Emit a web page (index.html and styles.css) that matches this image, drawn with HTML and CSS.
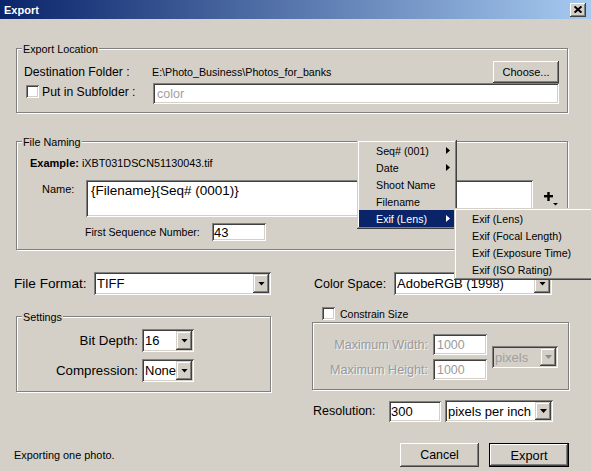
FILE: index.html
```html
<!DOCTYPE html>
<html>
<head>
<meta charset="utf-8">
<title>Export</title>
<link rel="stylesheet" href="styles.css">
</head>
<body>
<div class="window">
  <div class="titlebar">
    <span class="title">Export</span>
    <span class="close"><svg width="8" height="7" viewBox="0 0 8 7"><path d="M0.6 0.4 L7.4 6.6 M7.4 0.4 L0.6 6.6" stroke="#000" stroke-width="1.9"/></svg></span>
  </div>
  <div class="content">
    <div class="group loc">
      <span class="legend">Export Location</span>
      <span class="lbl">Destination Folder :</span>
      <span class="path">E:\Photo_Business\Photos_for_banks</span>
      <span class="btn choose">Choose...</span>
      <span class="lbl chk-lbl"><span class="cbox"></span>Put in Subfolder :</span>
      <span class="field sub">color</span>
    </div>

    <div class="group naming">
      <span class="legend">File Naming</span>
      <div class="example"><b>Example:</b> iXBT031DSCN51130043.tif</div>
      <div class="name-row">
        <span class="name-lbl">Name:</span>
        <div class="field textarea">{Filename}{Seq# (0001)}</div>
        <svg class="plus" width="17" height="16" viewBox="0 0 17 16"><rect x="1" y="4" width="9" height="2.4" fill="#000"/><rect x="4.3" y="1" width="2.4" height="9" fill="#000"/><polygon points="10,12 15,12 12.5,14.6" fill="#000"/></svg>
      </div>
      <div class="seq-row">
        <span class="seq-lbl">First Sequence Number:</span>
        <span class="field seq">43</span>
      </div>
    </div>

    <div class="formats">
      <div class="fmt left">
        <span class="fmt-lbl">File Format:</span>
        <div class="combo ff"><span class="val">TIFF</span><span class="arr"><i class="tri"></i></span></div>
      </div>
      <div class="fmt right">
        <span class="fmt-lbl cs">Color Space:</span>
        <div class="combo csel"><span class="val">AdobeRGB (1998)</span><span class="arr"><i class="tri"></i></span></div>
      </div>
    </div>

    <div class="lower">
      <div class="group settings">
        <span class="legend">Settings</span>
        <div class="set-row">
          <span class="set-lbl">Bit Depth:</span>
          <div class="combo small"><span class="val">16</span><span class="arr"><i class="tri"></i></span></div>
        </div>
        <div class="set-row">
          <span class="set-lbl">Compression:</span>
          <div class="combo small"><span class="val">None</span><span class="arr"><i class="tri"></i></span></div>
        </div>
      </div>

      <div class="rcol">
        <div class="cs-row"><span class="cbox"></span><span class="cs-lbl">Constrain Size</span></div>
        <div class="group constrain">
          <div class="c-grid">
            <span class="c-lbl dis">Maximum Width:</span>
            <span class="field num dtxt">1000</span>
            <div class="combo disabled pix"><span class="val">pixels</span><span class="arr"><i class="tri"></i></span></div>
            <span class="c-lbl dis">Maximum Height:</span>
            <span class="field num dtxt">1000</span>
          </div>
        </div>
        <div class="res-row">
          <span class="res-lbl">Resolution:</span>
          <span class="field res">300</span>
          <div class="combo ppi"><span class="val">pixels per inch</span><span class="arr"><i class="tri"></i></span></div>
        </div>
      </div>
    </div>

    <div class="footer">
      <span class="status">Exporting one photo.</span>
      <span class="btn cancel">Cancel</span>
      <span class="btn export">Export</span>
    </div>
  </div>

  <div class="menu m1">
    <div class="mi">Seq# (001)<i class="rtri"></i></div>
    <div class="mi">Date<i class="rtri"></i></div>
    <div class="mi">Shoot Name</div>
    <div class="mi">Filename</div>
    <div class="mi hl">Exif (Lens)<i class="rtri"></i></div>
  </div>
  <div class="menu m2">
    <div class="mi">Exif (Lens)</div>
    <div class="mi">Exif (Focal Length)</div>
    <div class="mi">Exif (Exposure Time)</div>
    <div class="mi">Exif (ISO Rating)</div>
  </div>
</div>
</body>
</html>
```

FILE: styles.css
```css
* { box-sizing: border-box; }
html, body { margin: 0; padding: 0; }
body {
  width: 591px; height: 471px; overflow: hidden;
  background: #d4d0c8;
  font-family: "Liberation Sans", Arial, sans-serif;
  font-size: 11px; color: #000;
}
.window {
  position: relative; width: 591px; height: 471px;
  background: #d4d0c8; overflow: hidden;
  display: flex; flex-direction: column;
}
.titlebar {
  height: 19px; flex: none;
  background: linear-gradient(to right, #0a246a, #a6caf0);
  display: flex; align-items: center;
  padding: 0 5px 0 4px;
}
.title { flex: 1; color: #fff; font-weight: bold; font-size: 11px; }
.close {
  width: 16px; height: 14px; background: #d4d0c8;
  display: flex; align-items: center; justify-content: center;
  box-shadow: inset -1px -1px #404040, inset 1px 1px #fff, inset -2px -2px #808080;
}
.close svg { display: block; }

.content {
  flex: 1; display: flex; flex-direction: column;
  padding: 29px 22px 4px 16px;
}

/* group boxes */
.group {
  position: relative;
  border: 1px solid #808080;
  box-shadow: inset 1px 1px 0 #fff, 1px 1px 0 #fff;
}
.legend {
  position: absolute; top: -6px; left: 5px;
  padding: 0 1px; background: #d4d0c8;
  font-size: 10.8px; line-height: 13px; white-space: nowrap;
}

/* 3D pieces */
.btn {
  display: flex; align-items: center; justify-content: center;
  background: #d4d0c8;
  box-shadow: inset -1px -1px #404040, inset 1px 1px #fff, inset -2px -2px #808080;
}
.field {
  background: #fff;
  box-shadow: inset 1px 1px #808080, inset -1px -1px #fff, inset 2px 2px #404040, inset -2px -2px #d4d0c8;
  display: flex; align-items: center;
  font-size: 13px; padding: 0 4px; white-space: nowrap;
}
.cbox {
  width: 13px; height: 13px; flex: none; background: #fff;
  box-shadow: inset 1px 1px #808080, inset -1px -1px #fff, inset 2px 2px #404040, inset -2px -2px #d4d0c8;
}
.combo {
  display: flex; height: 23px; padding: 2px; background: #fff;
  box-shadow: inset 1px 1px #808080, inset -1px -1px #fff, inset 2px 2px #404040, inset -2px -2px #d4d0c8;
  font-size: 13px; flex: none;
}
.combo .val { flex: 1; display: flex; align-items: center; padding-left: 1px; white-space: nowrap; overflow: hidden; }
.combo .arr {
  width: 16px; flex: none; background: #d4d0c8;
  display: flex; align-items: center; justify-content: center;
  box-shadow: inset -1px -1px #404040, inset 1px 1px #d4d0c8, inset -2px -2px #808080, inset 2px 2px #fff;
}
.tri {
  display: block; width: 7px; height: 4px; background: #000;
  clip-path: polygon(0 0, 100% 0, 50% 100%);
  margin-left: 1px;
}
.combo.disabled { background: #d4d0c8; color: #a0a0a0; }
.combo.disabled .tri { background: #8c8c8c; }

/* export location */
.loc {
  width: 552px;
  padding: 12px 8px 8px 7px;
  display: grid;
  grid-template-columns: 129px 1fr 66px;
  grid-template-rows: 22px 21px;
  align-items: center;
}
.lbl { font-size: 12.2px; white-space: nowrap; }
.path { font-size: 10.7px; margin-left: -1px; white-space: nowrap; }
.choose { height: 22px; font-size: 11px; }
.chk-lbl { display: flex; align-items: center; margin-bottom: 4px; }
.chk-lbl .cbox { margin: 0 3px 0 2px; }
.sub { grid-column: 2 / 4; height: 21px; color: #a0a0a0; font-size: 12.5px; }

/* file naming */
.naming { width: 552px; margin-top: 28px; padding: 15px 0 8px 0; }
.example { padding-left: 13px; line-height: 13px; font-size: 10.8px; white-space: nowrap; }
.example b { font-size: 11px; }
.name-row { display: flex; align-items: flex-start; margin-top: 10px; padding-left: 25px; }
.name-lbl { width: 44px; padding-top: 3px; line-height: 13px; }
.textarea { width: 447px; height: 37px; align-items: flex-start; padding: 3px 5px; font-size: 13.5px; line-height: 16px; }
.plus { display: block; margin: 11px 0 0 10px; }
.seq-row { display: flex; align-items: center; margin-top: 6px; padding-left: 68px; }
.seq-lbl { width: 127px; font-size: 10.6px; white-space: nowrap; }
.seq { width: 54px; height: 18px; padding-left: 2px; }

/* formats row */
.formats { display: flex; margin-top: 22px; margin-left: -2px; height: 23px; }
.fmt { display: flex; align-items: center; flex: none; }
.fmt.left { width: 300px; }
.fmt.right { width: 238px; }
.fmt-lbl { width: 80px; flex: none; font-size: 13.6px; white-space: nowrap; }
.fmt-lbl.cs { font-size: 12.5px; }
.combo.ff { width: 177px; }
.combo.csel { width: 158px; }

/* lower */
.lower { display: flex; align-items: flex-start; }
.settings { width: 255px; height: 76px; margin-top: 21px; padding-top: 12px; flex: none; }
.set-row { display: flex; align-items: center; height: 23px; }
.set-row + .set-row { margin-top: 7px; }
.set-lbl { width: 125px; padding-right: 4px; text-align: right; font-size: 13.3px; white-space: nowrap; }
.combo.small { width: 52px; }

.rcol { width: 257px; flex: none; margin-left: 41px; display: flex; flex-direction: column; }
.cs-row { display: flex; align-items: center; height: 13px; margin: 12px 0 2px 10px; }
.cs-row .cbox { margin-right: 5px; }
.cs-lbl { font-size: 10.5px; white-space: nowrap; }
.constrain { height: 68px; padding-top: 11px; }
.c-grid {
  display: grid;
  grid-template-columns: 120px 54px 66px;
  grid-template-rows: 21px 21px;
  row-gap: 4px; align-items: center;
}
.c-lbl { text-align: right; padding-right: 5px; font-size: 12.6px; white-space: nowrap; }
.dis { color: #9a9a9a; text-shadow: 1px 1px 0 #f4f4f4; }
.num { height: 21px; }
.dtxt { color: #9a9a9a; font-size: 12.4px; padding-left: 4px; }
.pix { grid-column: 3; grid-row: 1 / 3; align-self: center; margin-left: 5px; height: 22px; width: 66px; }

.res-row { display: flex; align-items: center; margin-top: 10px; margin-left: 1px; }
.res-lbl { width: 76px; flex: none; font-size: 12.5px; white-space: nowrap; }
.res { width: 52px; height: 21px; padding-left: 2px; flex: none; }
.combo.ppi { width: 108px; height: 22px; margin-left: 4px; }

/* footer */
.footer { margin-top: auto; display: flex; align-items: center; height: 24px; }
.status { margin-left: -2px; flex: 1; font-size: 10.9px; }
.cancel { width: 79px; height: 24px; font-size: 12.4px; flex: none; }
.export {
  width: 80px; height: 24px; margin-left: 10px; font-size: 12.8px; flex: none;
  box-shadow: inset 0 0 0 1px #000, inset -2px -2px #404040, inset 2px 2px #fff, inset -3px -3px #808080;
}

/* menus */
.menu {
  position: absolute; background: #d4d0c8;
  padding: 2px 3px 2px 2px;
  font-size: 10.7px; white-space: nowrap;
  box-shadow: inset -1px -1px #404040, inset 1px 1px #d4d0c8, inset -2px -2px #808080, inset 2px 2px #fff;
}
.m1 { left: 357px; top: 140px; width: 100px; z-index: 2; }
.m2 { left: 454px; top: 208px; width: 150px; z-index: 3; }
.mi { position: relative; height: 17px; display: flex; align-items: center; padding-left: 17px; }
.m2 .mi { padding-left: 16px; }
.mi.hl { background: #0a246a; color: #fff; }
.rtri {
  position: absolute; right: 4px; top: 5px;
  width: 4px; height: 7px; background: #000;
  clip-path: polygon(0 0, 100% 50%, 0 100%);
}
.mi.hl .rtri { background: #fff; }
```
